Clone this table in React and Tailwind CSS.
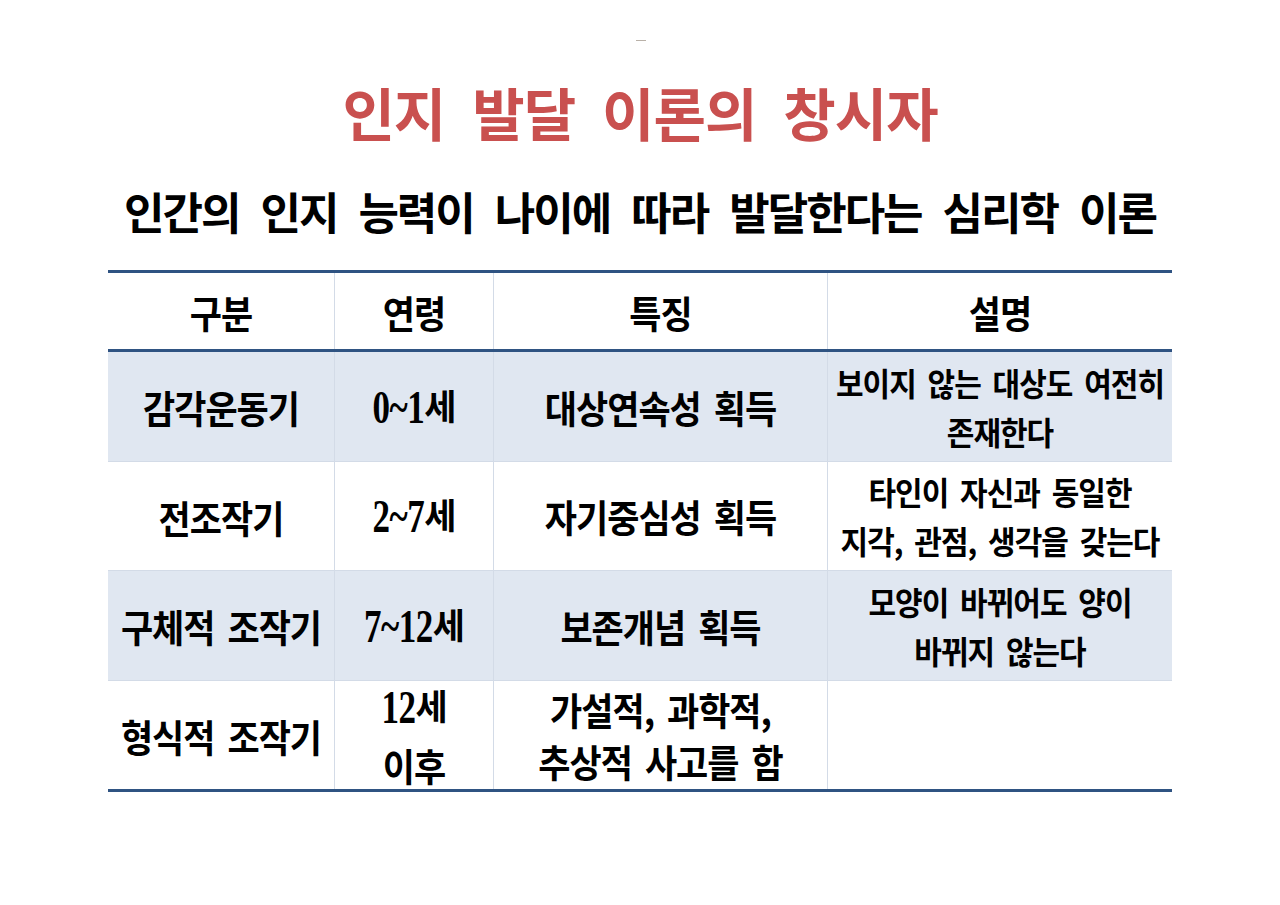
import React from "react";

const KR = { fontFamily: '"Noto Sans CJK KR", "Noto Sans", sans-serif' };

const rows = [
  {
    bg: "bg-[#e0e7f1]",
    h: "h-[110px]",
    a: "감각운동기",
    b: ["0~1세"],
    c: ["대상연속성 획득"],
    d: ["보이지 않는 대상도 여전히", "존재한다"],
  },
  {
    bg: "bg-white",
    h: "h-[109px]",
    a: "전조작기",
    b: ["2~7세"],
    c: ["자기중심성 획득"],
    d: ["타인이 자신과 동일한", "지각, 관점, 생각을 갖는다"],
  },
  {
    bg: "bg-[#e0e7f1]",
    h: "h-[110px]",
    a: "구체적 조작기",
    b: ["7~12세"],
    c: ["보존개념 획득"],
    d: ["모양이 바뀌어도 양이", "바뀌지 않는다"],
  },
  {
    bg: "bg-white",
    h: "h-[108px]",
    a: "형식적 조작기",
    b: ["12세", "이후"],
    c: ["가설적, 과학적,", "추상적 사고를 함"],
    d: [],
  },
];

function Num({ text }) {
  const parts = text.split(/([0-9~]+)/).filter(Boolean);
  return (
    <>
      {parts.map((p, i) =>
        /[0-9~]/.test(p) ? (
          <span
            key={i}
            className="inline-block font-['Liberation_Serif'] font-bold text-[35px] tracking-[-0.5px] scale-y-[1.3]"
          >
            {p}
          </span>
        ) : (
          <span key={i}>{p}</span>
        )
      )}
    </>
  );
}

function Cell({ w, children, last }) {
  return (
    <div
      className={`${w} flex flex-col items-center justify-center ${
        last ? "" : "border-r border-[#d3dbe7]"
      }`}
    >
      {children}
    </div>
  );
}

export default function App() {
  return (
    <div
      className="w-[1280px] h-[905px] bg-white flex flex-col items-center text-black"
      style={KR}
    >
      <div className="mt-[40px] ml-[1px] w-[10px] h-[1px] bg-[#b9b1a8]" />
      <h1 className="mt-[35px] h-[71px] flex items-center text-[57px] font-bold text-[#c9504f] leading-none tracking-[-1px] [word-spacing:15px]">
        인지 발달 이론의 창시자
      </h1>
      <h2 className="mt-[41px] h-[46px] flex items-center text-[44px] font-bold leading-none tracking-[-2px] [word-spacing:13px]">
        인간의 인지 능력이 나이에 따라 발달한다는 심리학 이론
      </h2>

      <div className="mt-[36px] w-[1064px] border-t-[3px] border-b-[3px] border-[#2f5382] font-bold">
        <div className="flex h-[79px] border-b-[3px] border-[#2f5382] text-[35px] tracking-[-1px] leading-none bg-white">
          <Cell w="w-[227px]">
            <span className="inline-block scale-y-[1.08]">구분</span>
          </Cell>
          <Cell w="w-[159px]">
            <span className="inline-block scale-y-[1.08]">연령</span>
          </Cell>
          <Cell w="w-[334px]">
            <span className="inline-block scale-y-[1.08]">특징</span>
          </Cell>
          <Cell w="w-[344px]" last>
            <span className="inline-block scale-y-[1.08]">설명</span>
          </Cell>
        </div>
        {rows.map((r, i) => (
          <div
            key={i}
            className={`flex ${r.h} ${r.bg} ${
              i < rows.length - 1 ? "border-b border-[#d3dbe7]" : ""
            }`}
          >
            <Cell w="w-[227px]">
              <span className="inline-block scale-y-[1.08] text-[35px] tracking-[-1px] [word-spacing:6px] leading-none">
                {r.a}
              </span>
            </Cell>
            <Cell w="w-[159px]">
              {r.b.map((x, j) => (
                <span
                  key={j}
                  className="inline-block text-[35px] tracking-[-1px] leading-[56px]"
                >
                  {/[0-9]/.test(x) ? (
                    <Num text={x} />
                  ) : (
                    <span className="inline-block scale-y-[1.08]">{x}</span>
                  )}
                </span>
              ))}
            </Cell>
            <Cell w="w-[334px]">
              {r.c.map((x, j) => (
                <span
                  key={j}
                  className="inline-block scale-y-[1.08] text-[35px] tracking-[-1px] [word-spacing:6px] leading-[52px]"
                >
                  {x}
                </span>
              ))}
            </Cell>
            <Cell w="w-[344px]" last>
              {r.d.map((x, j) => (
                <span
                  key={j}
                  className="inline-block scale-y-[1.05] text-[30px] tracking-[-1px] [word-spacing:6px] leading-[49px]"
                >
                  {x}
                </span>
              ))}
            </Cell>
          </div>
        ))}
      </div>
    </div>
  );
}
